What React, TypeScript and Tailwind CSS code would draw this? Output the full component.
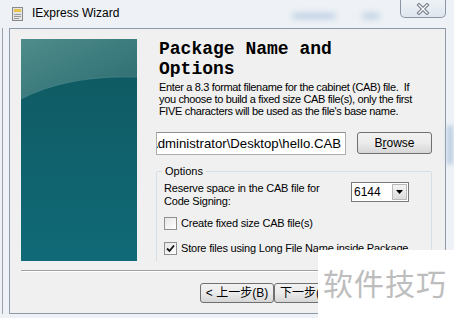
import React from "react";

const ui = { fontFamily: '"Liberation Sans", "Noto Sans CJK SC", sans-serif' };

function TitleIcon() {
  return (
    <svg width="11" height="14" viewBox="0 0 11 14">
      <rect x="0.5" y="0.5" width="10" height="13" fill="#e4e4e4" stroke="#8a8a8a" />
      <rect x="2" y="2" width="7" height="3" fill="#e8c44a" />
      <rect x="2" y="7" width="7" height="1" fill="#9a9a9a" />
      <rect x="2" y="9" width="7" height="1" fill="#9a9a9a" />
      <rect x="2" y="11" width="5" height="1" fill="#9a9a9a" />
    </svg>
  );
}

function CloseGlyph() {
  return (
    <svg width="14" height="12" viewBox="0 0 14 12">
      <path d="M3 2 L11 10 M11 2 L3 10" stroke="#6d7683" strokeWidth="3.4" strokeLinecap="square" />
      <path d="M3 2 L11 10 M11 2 L3 10" stroke="#ffffff" strokeWidth="1.4" strokeLinecap="square" />
    </svg>
  );
}

function WizardArt() {
  return (
    <svg width="116" height="222" viewBox="0 0 116 222" className="block">
      <defs>
        <linearGradient id="base" x1="0" y1="0" x2="0" y2="1">
          <stop offset="0" stopColor="#0f5860" />
          <stop offset="1" stopColor="#106a77" />
        </linearGradient>
        <linearGradient id="sky" x1="0" y1="0" x2="1" y2="1">
          <stop offset="0" stopColor="#4f8c8b" />
          <stop offset="1" stopColor="#2a6b70" />
        </linearGradient>
      </defs>
      <rect width="116" height="222" fill="url(#base)" />
      <path d="M0 60 Q 46 36 116 38 V0 H0 Z" fill="url(#sky)" />
      <path d="M0 60 Q 46 36 116 38" fill="none" stroke="#5a9595" strokeOpacity="0.5" strokeWidth="1" />
    </svg>
  );
}

function CheckBox({ checked }: { checked?: boolean }) {
  return (
    <div className="flex h-[13px] w-[13px] shrink-0 items-center justify-center border border-[#8e8f8f] bg-gradient-to-br from-[#e6e6e6] to-white">
      {checked && (
        <svg width="9" height="9" viewBox="0 0 9 9">
          <path d="M1 4.5 L3.5 7 L8 1.5" fill="none" stroke="#111" strokeWidth="1.8" />
        </svg>
      )}
    </div>
  );
}

function WinButton({ children, className = "" }: { children: React.ReactNode; className?: string }) {
  return (
    <div
      className={`flex items-center justify-center rounded-[3px] border border-[#707070] bg-gradient-to-b from-[#f2f2f2] via-[#ebebeb] to-[#d6d6d6] text-[12px] text-black ${className}`}
      style={ui}
    >
      {children}
    </div>
  );
}

export default function App() {
  return (
    <div className="relative flex h-[318px] w-[454px] flex-col overflow-hidden bg-[#eef2f6]" style={ui}>
      {/* blurred desktop behind the glass frame */}
      <div className="pointer-events-none absolute left-[292px] top-[13px] h-[6px] w-[44px] rounded-full bg-[#9db7d6] opacity-60 blur-[3px]" />
      <div className="pointer-events-none absolute left-[362px] top-[13px] h-[6px] w-[18px] rounded-full bg-[#9db7d6] opacity-60 blur-[3px]" />
      <div className="pointer-events-none absolute left-[447px] top-[125px] h-[40px] w-[6px] rounded-full bg-[#a9bfd9] opacity-70 blur-[2px]" />

      {/* title bar */}
      <div className="relative flex h-[28px] shrink-0 items-start">
        <div className="ml-[12px] mt-[7px]">
          <TitleIcon />
        </div>
        <div className="ml-[9px] mt-[6px] text-[12px] leading-[15px] text-black">IExpress Wizard</div>
        <div className="ml-auto mr-[8px] flex h-[18px] w-[46px] items-center justify-center rounded-b-[5px] border border-t-0 border-[#8b95a3] bg-gradient-to-b from-[#eef2f6] to-[#dfe6ee]">
          <CloseGlyph />
        </div>
      </div>

      {/* window body */}
      <div className="flex">
        <div className="w-[3px] border-r border-[#9aa3ad]" />
        <div className="w-[6px]" />
        <div className="flex h-[286px] w-[437px] flex-col border border-[#8d9aa8] bg-[#f0f0f0]">
          <div className="ml-[11px] mt-[10px] flex">
            <WizardArt />
            <div className="ml-[19px] h-[222px] w-[276px] overflow-hidden">
              <div
                className="h-[38px] overflow-hidden pl-[3px] text-[18px] font-bold leading-[20px] text-black"
                style={{ fontFamily: '"Liberation Mono", monospace' }}
              >
                Package Name and
                <br />
                Options
              </div>
              <div className="mt-[4px] pl-[3px] text-[11px] leading-[12px] tracking-[-0.35px] text-black">
                Enter a 8.3 format filename for the cabinet (CAB) file.&nbsp; If
                <br />
                you choose to build a fixed size CAB file(s), only the first
                <br />
                FIVE characters will be used as the file&apos;s base name.
              </div>
              <div className="mt-[15px] flex items-start">
                <div className="flex h-[23px] w-[190px] items-center justify-end overflow-hidden border border-[#abadb3] border-t-[#8e8f8f] bg-white pr-[4px] text-[13.2px] whitespace-nowrap text-black">
                  C:\Users\Administrator\Desktop\hello.CAB
                </div>
                <WinButton className="ml-[11px] h-[22px] w-[75px]">
                  <span>
                    B<span className="underline underline-offset-1">r</span>owse
                  </span>
                </WinButton>
              </div>
              <fieldset className="mt-[10px] h-[130px] w-[276px] rounded-[2px] border border-[#d5dfe5] pl-[7px] pr-0">
                <legend className="ml-[-2px] px-[3px] text-[11px] leading-[13px] text-black">Options</legend>
                <div className="mt-[4px] flex items-start">
                  <div className="w-[187px] text-[11px] leading-[13px] tracking-[-0.2px] text-black">
                    Reserve space in the CAB file for
                    <br />
                    Code Signing:
                  </div>
                  <div className="flex h-[20px] w-[58px] items-center border border-[#7a7a7a] bg-white">
                    <span className="pl-[2px] text-[12px] text-black">6144</span>
                    <div className="ml-auto mr-[1px] flex h-[16px] w-[15px] items-center justify-center border border-[#b8b8b8] bg-gradient-to-b from-[#f4f4f4] to-[#dcdcdc]">
                      <svg width="7" height="4" viewBox="0 0 7 4">
                        <path d="M0 0 H7 L3.5 4 Z" fill="#000" />
                      </svg>
                    </div>
                  </div>
                </div>
                <div className="mt-[9px] flex items-center gap-[4px]">
                  <CheckBox />
                  <span className="text-[11px] leading-[13px] tracking-[-0.2px] text-black">Create fixed size CAB file(s)</span>
                </div>
                <div className="mt-[12px] flex items-center gap-[4px]">
                  <CheckBox checked />
                  <span className="text-[11px] leading-[13px] tracking-[-0.2px] text-black">
                    Store files using Long File Name inside Package
                  </span>
                </div>
              </fieldset>
            </div>
          </div>
          <div className="ml-[11px] mt-[9px] h-[2px] w-[412px] border-t border-b border-t-[#a0a0a0] border-b-white" />
          <div className="ml-[190px] mt-[11px] flex">
            <WinButton className="h-[20px] w-[74px]">&lt; 上一步(B)</WinButton>
            <WinButton className="h-[20px] w-[75px]">下一步(N) &gt;</WinButton>
          </div>
        </div>
      </div>

      {/* watermark */}
      <div className="absolute left-[318px] top-[250px] right-0 bottom-0 bg-white">
        <div
          className="ml-[5px] mt-[14px] text-[30px] leading-[36px] tracking-[1px] text-[#bdbdbd]"
          style={{ fontFamily: '"Noto Sans CJK SC", sans-serif' }}
        >
          软件技巧
        </div>
      </div>
    </div>
  );
}
